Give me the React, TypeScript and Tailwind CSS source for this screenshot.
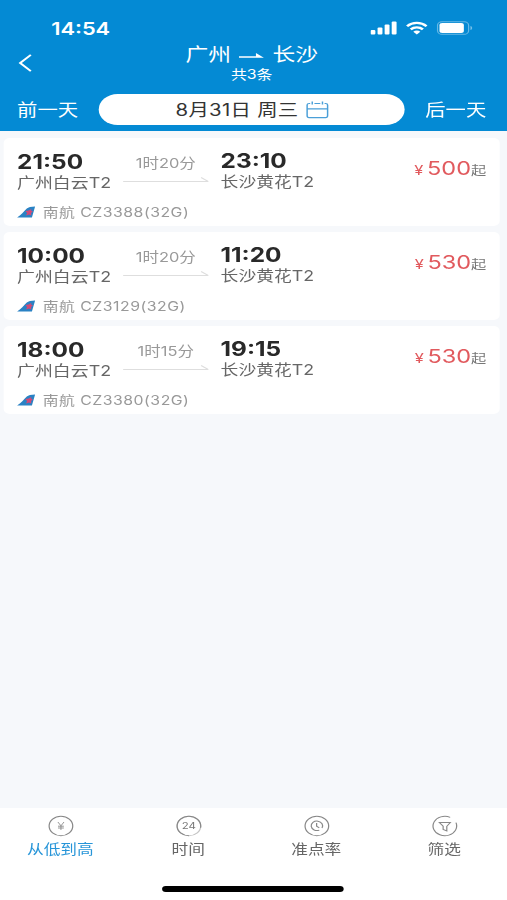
interface Flight {
  id: string;
  depart: string;
  arrive: string;
  duration: string;
  price: number;
}

const FLIGHTS: Flight[] = [
  { id: "CZ3388(32G)", depart: "21:50", arrive: "23:10", duration: "1时20分", price: 500 },
  { id: "CZ3129(32G)", depart: "10:00", arrive: "11:20", duration: "1时20分", price: 530 },
  { id: "CZ3380(32G)", depart: "18:00", arrive: "19:15", duration: "1时15分", price: 530 },
];

function StatusBar() {
  return (
    <div className="flex h-[42px] items-start justify-between pl-[42px] pr-[28px] pt-[18px]">
      <span className="text-[17.9px] font-semibold leading-[22px]">14:54</span>
      <div className="flex h-[20px] items-center gap-[7px]">
        <svg width="22" height="14" viewBox="0 0 22 14" fill="currentColor">
          <rect x="0" y="9" width="4" height="4.6" rx="1" />
          <rect x="5.8" y="6.5" width="4" height="7.1" rx="1" />
          <rect x="11.6" y="3.5" width="4" height="10.1" rx="1" />
          <rect x="17.4" y="0.5" width="4" height="13.1" rx="1" />
        </svg>
        <svg width="18" height="14" viewBox="0 0 18 14" fill="none" stroke="currentColor" strokeWidth="2.3">
          <path d="M1 5.2C5.5 0.7 12.5 0.7 17 5.2" />
          <path d="M4 8.4C6.8 5.7 11.2 5.7 14 8.4" />
          <path d="M9 13.6L6.1 10.7C7.7 9.2 10.3 9.2 11.9 10.7Z" fill="currentColor" stroke="none" />
        </svg>
        <svg width="30" height="14" viewBox="0 0 30 14" fill="none">
          <rect x="1" y="0.7" width="25.5" height="12.6" rx="3.6" stroke="#fff" strokeOpacity="0.4" />
          <rect x="2.6" y="2" width="20" height="10" rx="2.2" fill="#fff" />
          <path d="M28 5V9C29 8.6 29.4 7.9 29.4 7S29 5.4 28 5Z" fill="#fff" fillOpacity="0.45" />
        </svg>
      </div>
    </div>
  );
}

function Header() {
  return (
    <header className="h-[131px] shrink-0 bg-[#048ad4] text-white">
      <StatusBar />

      {/* Route */}
      <div className="grid h-[46px] grid-cols-[60px_1fr_63px]">
        <svg className="ml-[15px] mt-[12px]" width="12" height="18" viewBox="0 0 12 18" fill="none" stroke="currentColor" strokeWidth="1.8">
          <path d="M10.3 0.8L1.5 9L10.3 17.2" />
        </svg>
        <div className="flex flex-col items-center">
          <div className="flex items-center gap-[6.5px] text-[18.7px] leading-[25px]">
            <span>广州</span>
            <svg width="21" height="8" viewBox="0 0 21 8" fill="currentColor">
              <path d="M0 5.2H14V2L20.5 6.8H0Z" />
            </svg>
            <span>长沙</span>
          </div>
          <span className="text-[13px] leading-[15px]">共3条</span>
        </div>
      </div>

      {/* Day switch */}
      <div className="flex items-center justify-between pl-[14px] pr-[17px] pt-[6px] text-[16.7px]">
        <span className="pt-[2px]">前一天</span>
        <div className="flex h-[31px] w-[251px] items-center gap-[6px] rounded-full bg-white pl-[63px] text-[#333]">
          <span className="pt-[2px] tracking-[0.25px]">8月31日 周三</span>
          <svg width="19" height="19" viewBox="0 0 19 19" fill="none" stroke="#4a9fd8" strokeWidth="1.2">
            <path d="M3.5 3.5H2.6Q1 3.5 1 5V15.5Q1 17.6 2.6 17.6H16.2Q17.8 17.6 17.8 15.5V5Q17.8 3.5 16.2 3.5H15.3M7 3.5H11.8M1 8.8H17.8M5.2 1.5V4.6M13.6 1.5V4.6" />
          </svg>
        </div>
        <span className="pt-[2px]">后一天</span>
      </div>
    </header>
  );
}

function TailLogo() {
  return (
    <svg width="15" height="12" viewBox="0 0 15 12">
      <path d="M0 11.4C3.2 9.6 5.6 5.4 8 2.6Q9.8 0.6 14.8 0.6L12.2 11.4Z" fill="#2a82c4" />
      <path d="M11.6 3L9.6 4.6L6.8 5L8.2 7L7.4 9.6L9.8 8.6L11.6 9.6L11.5 7L13 5.2L11.7 4.9Z" fill="#d04a78" />
    </svg>
  );
}

function FlightCard({ flight }: { flight: Flight }) {
  return (
    <div className="grid h-[88px] grid-cols-[82px_80px_1fr_auto] grid-rows-[64px_20px] rounded-[5px] bg-white pl-[11px] pr-[11px]">
      <div className="pt-[13px]">
        <div className="text-[20px] font-bold leading-[22px] text-[#292929]">{flight.depart}</div>
        <div className="whitespace-nowrap text-[14.7px] leading-[21px] text-[#666]">广州白云T2</div>
      </div>
      <div className="flex flex-col items-center pt-[16px]">
        <span className="text-[13.5px] leading-[18px] text-[#999]">{flight.duration}</span>
        <svg className="mt-[4px]" width="70" height="8" viewBox="0 0 70 8" fill="none" stroke="#dedede" strokeWidth="1">
          <path d="M0 5.5H70L64 1.5" />
        </svg>
      </div>
      <div className="pl-[5px] pt-[12px]">
        <div className="text-[20px] font-bold leading-[22px] text-[#292929]">{flight.arrive}</div>
        <div className="text-[14.6px] leading-[21px] text-[#666]">长沙黄花T2</div>
      </div>
      <div className="flex items-baseline pt-[17px] leading-[26px] text-[#e15a5e]">
        <span className="mr-[3px] text-[13.5px]">¥</span>
        <span className="text-[19.3px]">{flight.price}</span>
        <span className="text-[12.5px] text-[#777]">起</span>
      </div>
      <div className="col-span-4 flex items-center gap-[6px] text-[13px] leading-[18px] text-[#999]">
        <TailLogo />
        <span className="tracking-[0.4px]">南航 {flight.id}</span>
      </div>
    </div>
  );
}

function TabBar() {
  return (
    <nav className="h-[92px] shrink-0 bg-white">
      <div className="-ml-[3px] grid w-[420px] grid-cols-4 pt-[7px] text-[13.7px] leading-[20px] text-[#666]">
        <div className="flex flex-col items-center gap-[2px]">
          <svg width="22" height="22" viewBox="0 0 22 22" fill="none" stroke="#888" strokeWidth="1">
            <circle cx="11" cy="11" r="9.7" />
            <path d="M8.5 7L11 10.8L13.5 7M11 10.8V15M8.6 11.2H13.4M8.6 13H13.4" strokeWidth="0.8" />
          </svg>
          <span className="text-[#2795d8]">从低到高</span>
        </div>
        <div className="flex flex-col items-center gap-[2px]">
          <svg width="22" height="22" viewBox="0 0 22 22" fill="none" stroke="#888" strokeWidth="1">
            <circle cx="11" cy="11" r="9.7" stroke="#c4c4c4" />
            <circle cx="11" cy="11" r="9.7" pathLength="100" strokeDasharray="78 22" transform="rotate(90 11 11)" />
            <text x="11" y="14.2" textAnchor="middle" fontSize="9.4" fill="#777" stroke="none">24</text>
          </svg>
          <span>时间</span>
        </div>
        <div className="flex flex-col items-center gap-[2px]">
          <svg width="22" height="22" viewBox="0 0 22 22" fill="none" stroke="#888" strokeWidth="1">
            <circle cx="11" cy="11" r="9.7" />
            <path d="M13 15.1A4.7 4.7 0 1 1 15.2 13M10.8 8V11.2L13 12.8" />
          </svg>
          <span>准点率</span>
        </div>
        <div className="flex flex-col items-center gap-[2px]">
          <svg width="22" height="22" viewBox="0 0 22 22" fill="none" stroke="#888" strokeWidth="1">
            <circle cx="11" cy="11" r="9.7" pathLength="100" strokeDasharray="88 12" transform="rotate(-20 11 11)" />
            <path d="M6.5 7.5H15.5L12.6 11.3V16L9.6 14.5V11.3Z" />
          </svg>
          <span>筛选</span>
        </div>
      </div>
      <div className="ml-[133px] mt-[27px] h-[5.5px] w-[149px] rounded-full bg-black" />
    </nav>
  );
}

export default function App() {
  return (
    <div className="h-[900px] w-[507px] overflow-hidden bg-[#f6f8fb]">
      {/* 416pt wide screen stretched to the full window width */}
      <div className="flex h-[900px] w-[416px] origin-left scale-x-[1.21875] flex-col font-['Inter','Noto_Sans_CJK_SC',sans-serif]">
        <Header />
        <main className="flex flex-1 flex-col gap-[6px] pl-[3px] pr-[6px] pt-[7px]">
          {FLIGHTS.map((f) => (
            <FlightCard key={f.id} flight={f} />
          ))}
        </main>
        <TabBar />
      </div>
    </div>
  );
}
